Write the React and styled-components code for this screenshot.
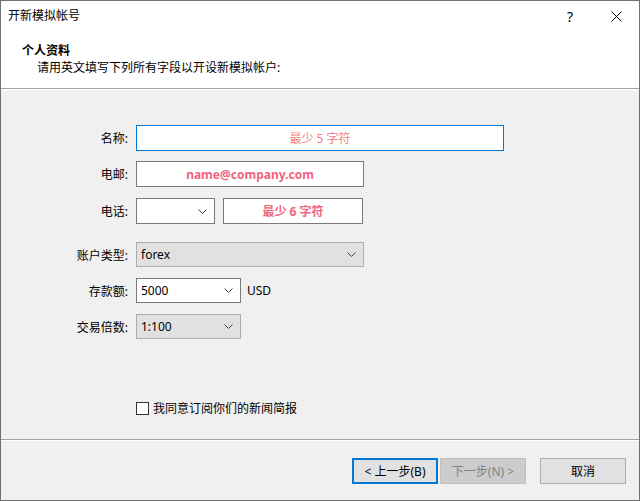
import React from 'react'
import styled, { createGlobalStyle } from 'styled-components'

const GlobalStyle = createGlobalStyle`
  html, body {
    margin: 0;
    padding: 0;
    background: #ffffff;
  }
  body {
    font-family: "Noto Sans", "Noto Sans CJK SC", sans-serif;
    font-size: 12px;
    color: #000000;
  }
`

const Window = styled.div`
  width: 640px;
  height: 501px;
  box-sizing: border-box;
  border: 1px solid #707070;
  display: flex;
  flex-direction: column;
  background: #f0f0f0;
  overflow: hidden;
`

const TitleBar = styled.div`
  height: 30px;
  flex: none;
  display: flex;
  align-items: center;
  background: #ffffff;
  padding-left: 7px;
`

const Title = styled.div`
  flex: 1;
  font-size: 12px;
  line-height: 16px;
`

const TitleButton = styled.div`
  width: 46px;
  height: 30px;
  display: flex;
  align-items: center;
  justify-content: center;
  font-size: 14px;
  color: #000000;
`

const Header = styled.div`
  height: 58px;
  flex: none;
  background: #ffffff;
  border-bottom: 1px solid #a0a0a0;
  box-sizing: border-box;
  padding: 11px 0 0 21px;
`

const HeaderTitle = styled.div`
  font-weight: bold;
  line-height: 17px;
`

const HeaderText = styled.div`
  padding-left: 15px;
  line-height: 17px;
`

const Body = styled.div`
  flex: 1;
  border-top: 1px solid #ffffff;
  border-bottom: 1px solid #a0a0a0;
  display: flex;
  flex-direction: column;
  padding: 35px 0 22px 0;
`

const Row = styled.div`
  display: flex;
  align-items: center;
  gap: 8px;
  margin-top: ${p => p.$mt || 0}px;
`

const Label = styled.div`
  width: 127px;
  text-align: right;
  flex: none;
`

const TextBox = styled.div`
  width: ${p => p.$w}px;
  height: ${p => p.$h || 26}px;
  box-sizing: border-box;
  border: 1px solid ${p => (p.$focus ? '#0078d7' : '#7a7a7a')};
  background: #ffffff;
  display: flex;
  align-items: center;
  justify-content: center;
  color: ${p => p.$color || '#000'};
  font-weight: ${p => (p.$bold ? 'bold' : 'normal')};
  font-size: 12px;
`

const Select = styled.div`
  width: ${p => p.$w}px;
  height: ${p => p.$h || 25}px;
  box-sizing: border-box;
  border: 1px solid ${p => (p.$flat ? '#adadad' : '#7a7a7a')};
  background: ${p => (p.$flat ? '#e1e1e1' : '#ffffff')};
  display: flex;
  align-items: center;
  padding: 0 7px 0 4px;
  font-size: 12px;
`

const SelectValue = styled.div`
  flex: 1;
`

const Unit = styled.div`
  margin-left: -2px;
`

const Spacer = styled.div`
  flex: 1;
`

const CheckRow = styled.label`
  display: flex;
  align-items: center;
  gap: 4px;
  padding-left: 135px;
`

const CheckBox = styled.span`
  width: 13px;
  height: 13px;
  box-sizing: border-box;
  border: 1px solid #333333;
  background: #ffffff;
`

const Footer = styled.div`
  height: 60px;
  flex: none;
  border-top: 1px solid #ffffff;
  display: flex;
  justify-content: flex-end;
  align-items: flex-start;
  padding: 17px 13px 0 0;
  box-sizing: border-box;
`

const Button = styled.div`
  width: 86px;
  height: 26px;
  box-sizing: border-box;
  display: flex;
  align-items: center;
  justify-content: center;
  margin-left: ${p => p.$ml || 0}px;
  border: ${p =>
    p.$primary ? '2px solid #0078d7' : p.$disabled ? '1px solid #bfbfbf' : '1px solid #adadad'};
  background: ${p => (p.$disabled ? '#cccccc' : '#e1e1e1')};
  color: ${p => (p.$disabled ? '#838383' : '#000000')};
`

const Chevron = () => (
  <svg width="9" height="5" viewBox="0 0 9 5">
    <polyline points="0.5,0.5 4.5,4.5 8.5,0.5" fill="none" stroke="#444" strokeWidth="1" />
  </svg>
)

const CloseIcon = () => (
  <svg width="11" height="11" viewBox="0 0 11 11">
    <path d="M0.5 0.5 L10.5 10.5 M10.5 0.5 L0.5 10.5" stroke="#000" strokeWidth="1" />
  </svg>
)

export default function App() {
  return (
    <>
      <GlobalStyle />
      <Window>
        <TitleBar>
          <Title>开新模拟帐号</Title>
          <TitleButton>?</TitleButton>
          <TitleButton>
            <CloseIcon />
          </TitleButton>
        </TitleBar>
        <Header>
          <HeaderTitle>个人资料</HeaderTitle>
          <HeaderText>请用英文填写下列所有字段以开设新模拟帐户:</HeaderText>
        </Header>
        <Body>
          <Row>
            <Label>名称:</Label>
            <TextBox $w={368} $focus $color="#f07f7f">最少 5 字符</TextBox>
          </Row>
          <Row $mt={10}>
            <Label>电邮:</Label>
            <TextBox $w={228} $color="#f2647f" $bold>name@company.com</TextBox>
          </Row>
          <Row $mt={11}>
            <Label>电话:</Label>
            <Select $w={79} $h={26}>
              <SelectValue />
              <Chevron />
            </Select>
            <TextBox $w={140} $color="#f2647f" $bold>最少 6 字符</TextBox>
          </Row>
          <Row $mt={18}>
            <Label>账户类型:</Label>
            <Select $w={228} $flat>
              <SelectValue>forex</SelectValue>
              <Chevron />
            </Select>
          </Row>
          <Row $mt={11}>
            <Label>存款额:</Label>
            <Select $w={105}>
              <SelectValue>5000</SelectValue>
              <Chevron />
            </Select>
            <Unit>USD</Unit>
          </Row>
          <Row $mt={11}>
            <Label>交易倍数:</Label>
            <Select $w={105} $flat>
              <SelectValue>1:100</SelectValue>
              <Chevron />
            </Select>
          </Row>
          <Spacer />
          <CheckRow>
            <CheckBox />
            我同意订阅你们的新闻简报
          </CheckRow>
        </Body>
        <Footer>
          <Button $primary>&lt; 上一步(B)</Button>
          <Button $disabled $ml={2}>下一步(N) &gt;</Button>
          <Button $ml={14}>取消</Button>
        </Footer>
      </Window>
    </>
  )
}
